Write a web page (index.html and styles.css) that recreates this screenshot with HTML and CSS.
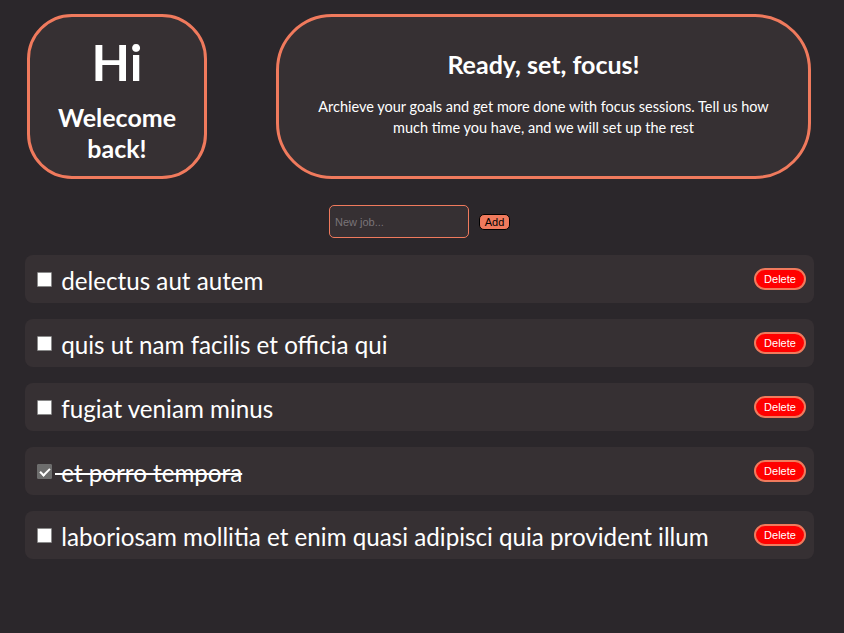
FILE: index.html
```html
<!DOCTYPE html>
<html lang="en">
<head>
<meta charset="utf-8">
<title>Focus</title>
<link rel="stylesheet" href="styles.css">
</head>
<body>
<div class="page">
  <header class="header">
    <div class="hello">
      <h1 class="hello-hi">Hi</h1>
      <h2 class="hello-back">Welecome back!</h2>
    </div>
    <div class="intro">
      <h2 class="intro-title">Ready, set, focus!</h2>
      <p class="intro-text">Archieve your goals and get more done with focus sessions. Tell us how much time you have, and we will set up the rest</p>
    </div>
  </header>

  <form class="new-job">
    <input class="new-job-input" type="text" placeholder="New job...">
    <button class="add-btn" type="button">Add</button>
  </form>

  <ul class="jobs">
    <li class="job">
      <label class="job-label"><input class="check" type="checkbox"><span class="job-text"> delectus aut autem</span></label>
      <button class="delete-btn" type="button">Delete</button>
    </li>
    <li class="job">
      <label class="job-label"><input class="check" type="checkbox"><span class="job-text"> quis ut nam facilis et officia qui</span></label>
      <button class="delete-btn" type="button">Delete</button>
    </li>
    <li class="job">
      <label class="job-label"><input class="check" type="checkbox"><span class="job-text"> fugiat veniam minus</span></label>
      <button class="delete-btn" type="button">Delete</button>
    </li>
    <li class="job">
      <label class="job-label"><input class="check" type="checkbox" checked><span class="job-text done"> et porro tempora</span></label>
      <button class="delete-btn" type="button">Delete</button>
    </li>
    <li class="job">
      <label class="job-label"><input class="check" type="checkbox"><span class="job-text"> laboriosam mollitia et enim quasi adipisci quia provident illum</span></label>
      <button class="delete-btn" type="button">Delete</button>
    </li>
  </ul>
</div>
</body>
</html>
```

FILE: styles.css
```css
* {
  box-sizing: border-box;
}

html, body {
  margin: 0;
  padding: 0;
  background: #2b272b;
  color: #ffffff;
  font-family: "Lato", "Open Sans", sans-serif;
}

.page {
  padding: 14px 30px 0 25px;
}

.header {
  display: flex;
  gap: 69px;
  padding: 0 3px 0 2px;
}

.hello {
  width: 180px;
  height: 165px;
  flex: none;
  border: 3px solid #f07a5d;
  border-radius: 45px;
  background: #363033;
  display: flex;
  flex-direction: column;
  align-items: center;
  padding-top: 20px;
  text-align: center;
}

.hello-hi {
  margin: 0;
  font-size: 50px;
  line-height: 50px;
  font-weight: 700;
}

.hello-back {
  margin: 15px 0 0;
  font-size: 25px;
  line-height: 31px;
  font-weight: 700;
}

.intro {
  flex: 1;
  height: 165px;
  border: 3px solid #f07a5d;
  border-radius: 56px;
  background: #363033;
  display: flex;
  flex-direction: column;
  align-items: center;
  padding-top: 32px;
  text-align: center;
}

.intro-title {
  margin: 0;
  font-size: 25px;
  line-height: 30px;
  font-weight: 700;
}

.intro-text {
  margin: 17px 0 0;
  max-width: 480px;
  font-size: 14.5px;
  line-height: 21px;
}

.new-job {
  display: flex;
  justify-content: center;
  align-items: center;
  gap: 10px;
  margin: 26px 0 17px;
}

.new-job-input {
  width: 140px;
  height: 33px;
  border: 1px solid #f07a5d;
  border-radius: 5px;
  background: #363033;
  color: #ffffff;
  padding: 0 5px;
  font-family: "Liberation Sans", Arial, sans-serif;
  font-size: 11px;
  outline: none;
}

.new-job-input::placeholder {
  color: #7a7478;
}

.add-btn {
  width: 31px;
  height: 16px;
  padding: 0;
  border: 1px solid #000000;
  border-radius: 5px;
  background: #f07a5d;
  color: #000000;
  font-family: "Liberation Sans", Arial, sans-serif;
  font-size: 11px;
  line-height: 14px;
}

.jobs {
  list-style: none;
  margin: 0;
  padding: 0;
  display: flex;
  flex-direction: column;
  gap: 16px;
}

.job {
  height: 48px;
  display: flex;
  align-items: center;
  background: #363033;
  border-radius: 8px;
  padding: 0 8px 0 12px;
}

.job-label {
  display: flex;
  align-items: center;
  flex: 1;
  min-width: 0;
}

.check {
  appearance: none;
  -webkit-appearance: none;
  width: 15px;
  height: 15px;
  margin: 0 3px 0 0;
  flex: none;
  background: #ffffff;
  border: 1px solid #8a8a8a;
  border-radius: 1px;
  position: relative;
}

.check:checked {
  background: #6d6d6d;
  border-color: #6d6d6d;
}

.check:checked::after {
  content: "";
  position: absolute;
  left: 4px;
  top: 1px;
  width: 4px;
  height: 8px;
  border: solid #ffffff;
  border-width: 0 2px 2px 0;
  transform: rotate(45deg);
}

.job-text {
  white-space: pre;
  font-size: 24.2px;
  line-height: 30px;
  padding-top: 3px;
}

.job-text.done {
  text-decoration: line-through;
  text-decoration-thickness: 2px;
}

.delete-btn {
  width: 52px;
  height: 22px;
  flex: none;
  padding: 0;
  border: 2px solid #f07a5d;
  border-radius: 12px;
  background: #ff0000;
  color: #ffffff;
  font-family: "Liberation Sans", Arial, sans-serif;
  font-size: 11px;
  margin-left: auto;
}
```
